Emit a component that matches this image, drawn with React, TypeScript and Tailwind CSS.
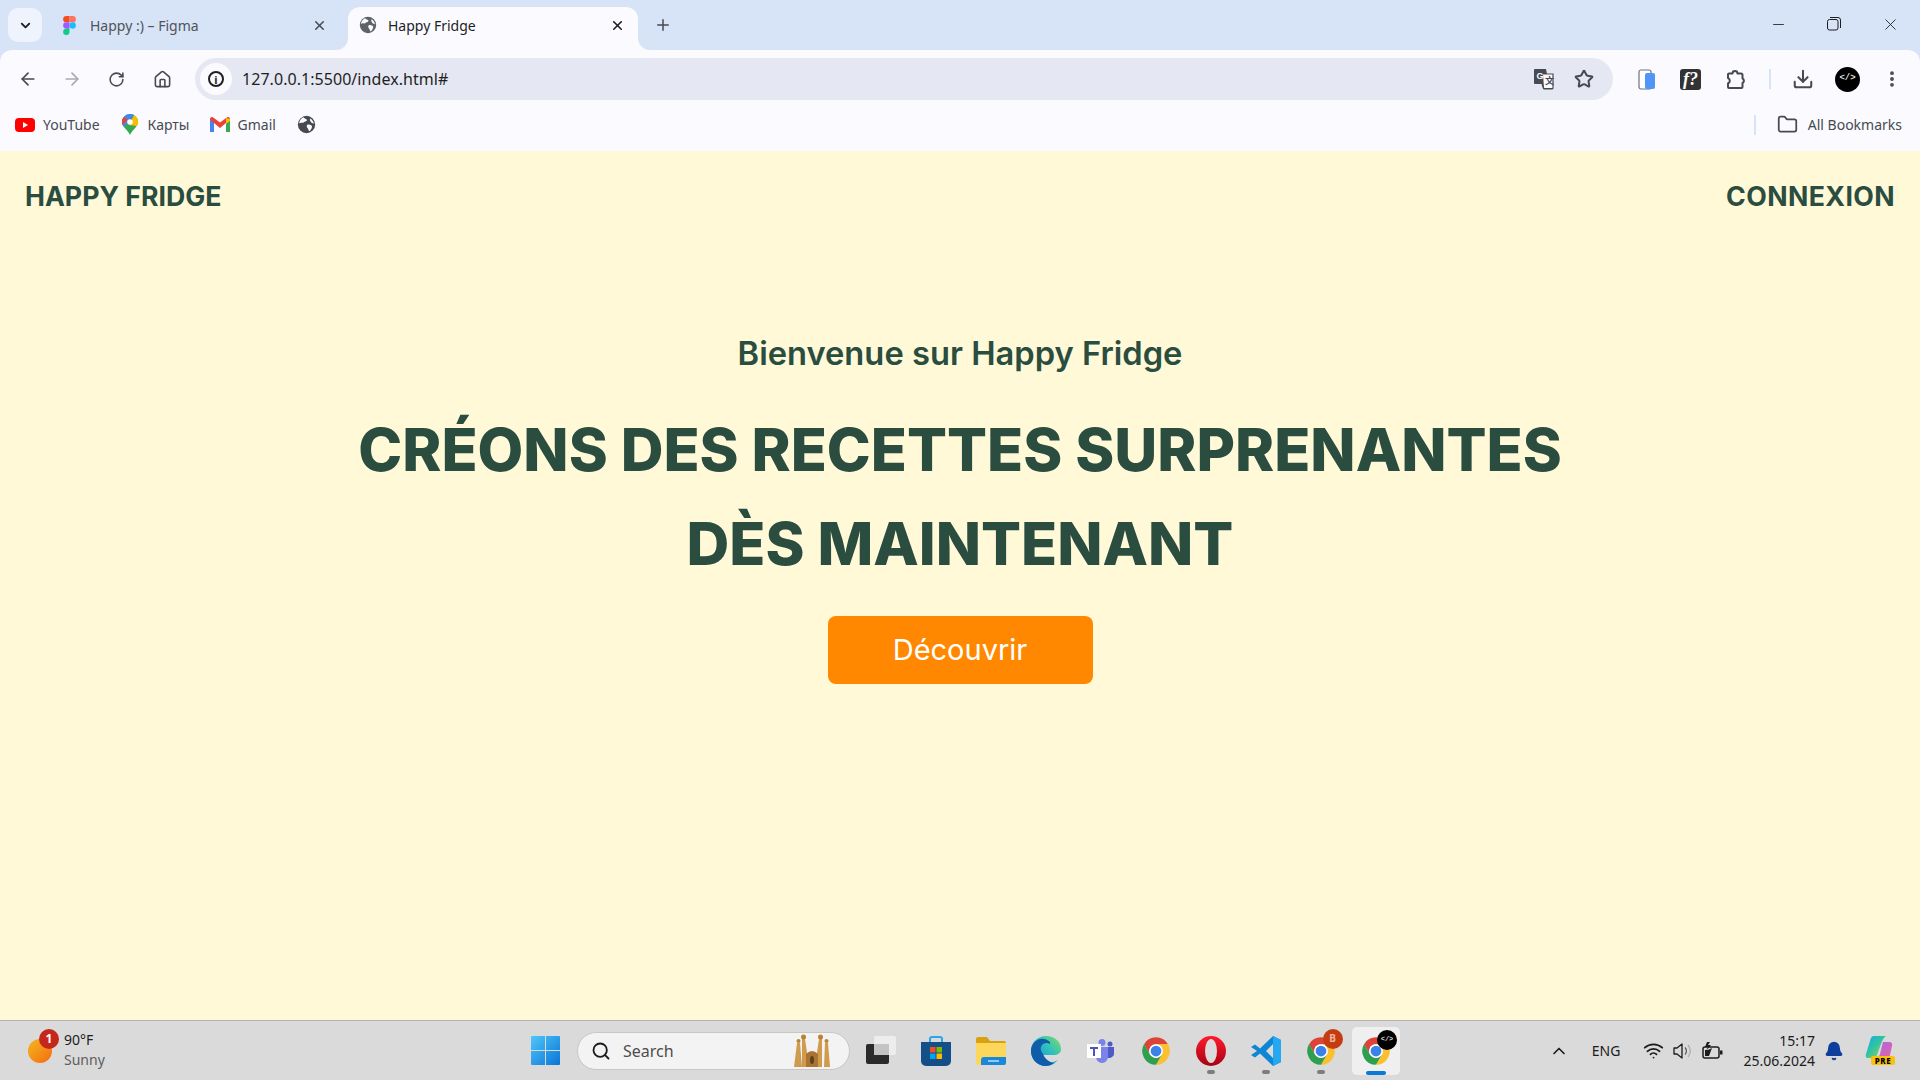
import React from "react";
import { ArrowLeft, ArrowRight, RotateCw, Home, X, Plus, ChevronDown, Minus, Star, Download, EllipsisVertical, Folder, Search, ChevronUp, Wifi, Bell } from "lucide-react";

const Globe = ({ s = 18, c = "#5f6368" }: { s?: number; c?: string }) => (
  <svg width={s} height={s} viewBox="0 0 18 18" className="shrink-0">
    <circle cx="9" cy="9" r="8.2" fill={c} />
    <path d="M6 2.2C7 3.5 8.8 3.6 9.6 4.8 9 6.4 6.8 6 6 7.4 4.8 7.6 3.4 6.8 2 8 2.2 5.4 3.8 3.3 6 2.2Z M9.8 9.2c1.8-.4 3.2.4 4.4 1.2.2 1.6-.8 3.6-2.4 5C10.800 15.200 11 13.400 10 12.400 9 11.600 9 10 9.800 9.200Z M12.500 3.200C14.500 4.400 15.800 6.400 16 8.300 14.800 8 13.400 7.400 12.800 6 12.300 5 12 4 12.500 3.200Z" fill="#fafaff" />
  </svg>
);

const Chrome = ({ s = 30 }: { s?: number }) => (
  <svg width={s} height={s} viewBox="0 0 24 24" className="shrink-0">
    <path d="M21.530 6.500A11 11 0 0 0 2.470 6.500L7.240 14.750A5.500 5.500 0 0 1 12 6.500Z" fill="#db4437" />
    <path d="M21.530 6.500A11 11 0 0 0 2.470 6.500L7.240 14.750A5.500 5.500 0 0 1 12 6.500Z" fill="#fbc02d" transform="rotate(120 12 12)" />
    <path d="M21.530 6.500A11 11 0 0 0 2.470 6.500L7.240 14.750A5.500 5.500 0 0 1 12 6.500Z" fill="#2e9e4f" transform="rotate(240 12 12)" />
    <circle cx="12" cy="12" r="5.500" fill="#fff" />
    <circle cx="12" cy="12" r="4.300" fill="#3b82e8" />
  </svg>
);

const Figma = () => (
  <svg width="13" height="19" viewBox="0 0 12 18" className="shrink-0">
    <path d="M3 0h3v6H3a3 3 0 0 1 0-6Z" fill="#f24e1e" />
    <path d="M6 0h3a3 3 0 0 1 0 6H6Z" fill="#ff7262" />
    <path d="M3 6h3v6H3a3 3 0 0 1 0-6Z" fill="#a259ff" />
    <circle cx="9" cy="9" r="3" fill="#1abcfe" />
    <path d="M3 12h3v3a3 3 0 1 1-3-3Z" fill="#0acf83" />
  </svg>
);

const Slot = ({ w = 55, children, dot = false }: { w?: number; children: React.ReactNode; dot?: boolean }) => (
  <div className="relative flex h-full items-center justify-center shrink-0" style={{ width: w }}>
    {children}
    {dot && <div className="absolute bottom-[6px] h-[4px] w-[8px] rounded-full bg-[#7d7d7d]" />}
  </div>
);

function TabStrip() {
  return (
    <div className="flex h-[50px] shrink-0 items-stretch bg-[#d7e3f6] text-[14px] text-[#474a51]">
      <div className="ml-[8px] mt-[8px] flex h-[34px] w-[34px] items-center justify-center rounded-[10px] bg-[#eff3fd]">
        <ChevronDown size={15} strokeWidth={3} color="#1f1f1f" />
      </div>
      <div className="ml-[21px] flex w-[279px] items-center">
        <Figma />
        <span className="ml-[14px] flex-1 text-[#50535a]">Happy :) – Figma</span>
        <X size={15} strokeWidth={2.4} className="mr-[15px]" color="#474a51" />
      </div>
      <div className="relative ml-[6px] mt-[7px] flex w-[290px] items-center rounded-t-[12px] bg-[#fafaff] pl-[11px] pb-[7px] text-[#1f1f1f]">
        <svg width="12" height="12" viewBox="0 0 12 12" className="absolute -left-[12px] bottom-0">
          <path d="M12 0v12H0A12 12 0 0 0 12 0Z" fill="#fafaff" />
        </svg>
        <Globe />
        <span className="ml-[11px] flex-1">Happy Fridge</span>
        <X size={15} strokeWidth={2.6} className="mr-[13px]" color="#1f1f1f" />
        <svg width="12" height="12" viewBox="0 0 12 12" className="absolute -right-[12px] bottom-0">
          <path d="M0 0v12h12A12 12 0 0 1 0 0Z" fill="#fafaff" />
        </svg>
      </div>
      <div className="ml-[16px] flex w-[18px] items-center justify-center">
        <Plus size={18} strokeWidth={2} color="#474a51" />
      </div>
      <div className="ml-auto flex items-center pb-[2px] text-[#1f1f1f]">
        <div className="flex w-[56px] justify-center"><Minus size={17} strokeWidth={1.2} /></div>
        <div className="flex w-[56px] justify-center">
          <svg width="14" height="14" viewBox="0 0 14 14" fill="none" stroke="#1f1f1f" strokeWidth="1">
            <rect x="0.500" y="2.500" width="10.500" height="10.500" rx="2" />
            <path d="M3 .5h8a2.500 2.500 0 0 1 2.500 2.500v8" />
          </svg>
        </div>
        <div className="flex w-[58px] justify-center pr-[2px]"><X size={19} strokeWidth={1.1} /></div>
      </div>
    </div>
  );
}

function Toolbar() {
  return (
    <div className="flex h-[58px] shrink-0 items-center rounded-t-[12px] bg-[#fafaff] text-[#474a51]">
      <div className="flex w-[195px] shrink-0 items-center pl-[18px]">
        <ArrowLeft size={20} strokeWidth={2} className="mr-[24px]" />
        <ArrowRight size={20} strokeWidth={2} color="#a8aab0" className="mr-[26px]" />
        <RotateCw size={17} strokeWidth={2.2} className="mr-[28px]" />
        <Home size={19} strokeWidth={2} />
      </div>
      <div className="flex h-[42px] flex-1 items-center rounded-full bg-[#e5e8f2] pl-[5px] pr-[19px]">
        <div className="flex h-[32px] w-[32px] items-center justify-center rounded-full bg-[#fafaff]">
          <div className="flex h-[16px] w-[16px] items-center justify-center rounded-full border-2 border-[#1f1f1f] text-[11px] font-bold leading-none text-[#1f1f1f]">i</div>
        </div>
        <span className="ml-[10px] flex-1 text-[16px] tracking-[0.05px] text-[#1f1f1f]">127.0.0.1:5500/index.html#</span>
        <svg width="22" height="22" viewBox="0 0 22 22" className="mr-[19px]">
          <path d="M2 1h11l1 5h6v14a1 1 0 0 1-1 1H10l-1-5H2a1 1 0 0 1-1-1V2a1 1 0 0 1 1-1Z" fill="#474a51" />
          <path d="M10 6h10v14H11Z" fill="#fafaff" />
          <path d="M10 6h10v14a1 1 0 0 1-1 1h-8L9 16" fill="none" stroke="#474a51" strokeWidth="1.200" />
          <text x="3.500" y="11" fontSize="9" fontWeight="700" fill="#fff" fontFamily="'Liberation Sans', sans-serif">G</text>
          <text x="12" y="16" fontSize="9" fontWeight="700" fill="#474a51" fontFamily="'Noto Sans CJK SC', sans-serif">文</text>
        </svg>
        <Star size={20} strokeWidth={2.4} color="#474a51" />
      </div>
      <div className="flex shrink-0 items-center">
        <div className="ml-[24px] flex w-[20px] justify-center">
          <svg width="18" height="21" viewBox="0 0 18 21">
            <rect x="1" y="1" width="12" height="19" rx="2" fill="#fff" stroke="#6b7280" strokeWidth="1.200" />
            <rect x="7" y="4" width="10" height="16" rx="2" fill="#4f95f7" />
          </svg>
        </div>
        <div className="ml-[23px] flex h-[21px] w-[21px] items-center justify-center rounded-[3px] bg-[#333] font-['Liberation_Serif',serif] text-[18px] font-bold italic leading-none text-white">f?</div>
        <svg width="21" height="21" viewBox="0 0 21 21" fill="none" stroke="#474a51" strokeWidth="2" className="ml-[25px]">
          <path d="M3 4.500h3.500a2.500 2.500 0 0 1 5 0H15a1.500 1.500 0 0 1 1.500 1.500v3.500a2.500 2.500 0 0 1 0 4.500V18a1 1 0 0 1-1 1H3a1 1 0 0 1-1-1v-3.500a3 3 0 0 0 0-5.500V5.500a1 1 0 0 1 1-1Z" strokeLinejoin="round" />
        </svg>
        <div className="ml-[22px] h-[20px] w-[2px] bg-[#d7e3f6]" />
        <Download size={22} strokeWidth={2.2} className="ml-[21px]" />
        <div className="ml-[21px] flex h-[25px] w-[25px] items-center justify-center rounded-full bg-black font-['Liberation_Mono',monospace] text-[9px] font-bold text-[#dddddd]">&lt;/&gt;</div>
        <EllipsisVertical size={20} strokeWidth={2.6} className="ml-[22px] mr-[18px]" />
      </div>
    </div>
  );
}

function Bookmarks() {
  return (
    <div className="flex h-[43px] shrink-0 items-center bg-[#fafaff] pb-[10px] text-[14px] text-[#474a51]">
      <svg width="20" height="14" viewBox="0 0 20 14" className="ml-[15px] shrink-0">
        <rect width="20" height="14" rx="4" fill="#f00" />
        <path d="M8 4l5 3-5 3Z" fill="#fff" />
      </svg>
      <span className="ml-[8px]">YouTube</span>
      <svg width="16" height="21" viewBox="0 0 16 21" className="ml-[22px] shrink-0">
        <path d="M8 21C6 16 0 13 0 8a8 8 0 0 1 16 0c0 5-6 8-8 13Z" fill="#34a853" />
        <path d="M2 3a8 8 0 0 1 6-3 8 8 0 0 1 4 1L2 13a8 8 0 0 1-2-5 8 8 0 0 1 2-5Z" fill="#4285f4" />
        <path d="M2 3l4 3-6 5a8 8 0 0 1 2-8Z" fill="#ea4335" />
        <path d="M12 1a8 8 0 0 1 4 7 8 8 0 0 1-1 4L7 11Z" fill="#fbbc04" />
        <circle cx="8" cy="8" r="2.800" fill="#fff" />
      </svg>
      <span className="ml-[10px]">Карты</span>
      <svg width="20" height="15" viewBox="0 0 20 15" className="ml-[20px] shrink-0">
        <path d="M0 2v13h4V6l6 5 6-5v9h4V2a2 2 0 0 0-3.200-1.600L10 5.500 3.200.4A2 2 0 0 0 0 2Z" fill="#ea4335" />
        <path d="M0 3v12h4V6Z" fill="#4285f4" />
        <path d="M16 6v9h4V3Z" fill="#34a853" />
        <path d="M16 1l4 1v2l-4 3Z" fill="#fbbc04" />
      </svg>
      <span className="ml-[8px]">Gmail</span>
      <div className="ml-[21px]"><Globe s={19} c="#474a51" /></div>
      <div className="ml-auto flex items-center">
        <div className="h-[20px] w-[2px] bg-[#d7e3f6]" />
        <Folder size={21} strokeWidth={2} className="ml-[21px]" />
        <span className="ml-[10px] mr-[18px]">All Bookmarks</span>
      </div>
    </div>
  );
}

function Page() {
  return (
    <div className="flex flex-1 flex-col bg-[#fff9d8] font-['Inter',sans-serif] text-[#2a4d40]">
      <div className="flex items-center justify-between pl-[25px] pr-[25px] pt-[25px] text-[26.7px] font-bold leading-[40px]">
        <span>HAPPY FRIDGE</span>
        <span className="tracking-[0.4px]">CONNEXION</span>
      </div>
      <div className="mt-[113px] flex flex-col items-center">
        <p className="text-[32.700px] font-semibold leading-[48px]">Bienvenue sur Happy Fridge</p>
        <h1 className="mt-[26px] text-center text-[59.200px] font-extrabold leading-[94px]">
          CRÉONS DES RECETTES SURPRENANTES
          <br />
          DÈS MAINTENANT
        </h1>
        <button className="mt-[25px] flex h-[68px] w-[265px] items-center justify-center rounded-[8px] bg-[#ff8800] text-[29px] text-white">Découvrir</button>
      </div>
    </div>
  );
}

function Taskbar() {
  return (
    <div className="flex h-[60px] shrink-0 items-stretch border-t border-[#b2b2b2] bg-[#dadada] font-['Noto_Sans',sans-serif] text-[#1c1c1c]">
      <div className="flex w-[525px] shrink-0 items-center pl-[28px]">
        <div className="relative h-[24px] w-[24px] rounded-full bg-gradient-to-br from-[#f3b61f] to-[#f26a10]">
          <div className="absolute -right-[7px] -top-[10px] flex h-[20px] w-[20px] items-center justify-center rounded-full bg-[#c4281c] text-[12px] font-bold text-white">1</div>
        </div>
        <div className="ml-[12px] pb-[2px] text-[14px] leading-[20px]">
          <div>90°F</div>
          <div className="text-[#5e5e5e]">Sunny</div>
        </div>
      </div>
      <div className="flex items-center">
        <Slot w={40}>
          <svg width="29" height="29" viewBox="0 0 29 29">
            <defs><linearGradient id="w" x1="0" y1="0" x2="1" y2="1"><stop offset="0" stopColor="#4fc6fb" /><stop offset="1" stopColor="#0a74d6" /></linearGradient></defs>
            <path d="M0 1a1 1 0 0 1 1-1h13v14H0Zm15-1h13a1 1 0 0 1 1 1v13H15ZM0 15h14v14H1a1 1 0 0 1-1-1Zm15 0h14v13a1 1 0 0 1-1 1H15Z" fill="url(#w)" />
          </svg>
        </Slot>
        <div className="ml-[12px] flex h-[38px] w-[273px] items-center rounded-full border border-[#c8c6c6] bg-[#f4f3f3] pl-[13px]">
          <Search size={20} strokeWidth={2.2} color="#1c1c1c" />
          <span className="ml-[12px] flex-1 text-[16px] text-[#4d4d4d]">Search</span>
          <svg width="36" height="33" viewBox="0 0 36 33" className="mr-[19px]">
            <path d="M0 33 3 9h3l2 24ZM8 33 8 5h3l3 20h8l3-20h3l0 28ZM30 33l1-24h3l2 24Z" fill="#cf9b4f" />
            <path d="M12 33V20q6-6 12 0v13Z" fill="#a97432" />
            <ellipse cx="18" cy="26" rx="2" ry="4" fill="#5f3f1d" />
            <circle cx="4.500" cy="7" r="2" fill="#b98432" /><circle cx="9.500" cy="3" r="2.500" fill="#b98432" /><circle cx="26.500" cy="3" r="2.500" fill="#b98432" /><circle cx="32.500" cy="7" r="2" fill="#b98432" />
          </svg>
        </div>
        <div className="ml-[3px] flex h-full w-[55px] shrink-0 items-center justify-center">
          <svg width="30" height="30" viewBox="0 0 30 30">
            <rect x="0" y="8" width="23" height="20" rx="2" fill="#2b2b2b" />
            <rect x="8" y="0" width="22" height="19" rx="2" fill="#efeeee" fillOpacity="0.9" />
            <rect x="8" y="8" width="15" height="11" fill="#c4c4c4" />
          </svg>
        </div>
        <Slot w={55}>
          <svg width="30" height="30" viewBox="0 0 30 30">
            <path d="M9 7V3a2 2 0 0 1 2-2h8a2 2 0 0 1 2 2v4" fill="none" stroke="#2ba6e8" strokeWidth="2" />
            <path d="M0 6h30v19a5 5 0 0 1-5 5H5a5 5 0 0 1-5-5Z" fill="#144f87" />
            <rect x="9" y="11" width="5.500" height="5.500" fill="#f25022" /><rect x="15.500" y="11" width="5.500" height="5.500" fill="#7fba00" />
            <rect x="9" y="17.500" width="5.500" height="5.500" fill="#00a4ef" /><rect x="15.500" y="17.500" width="5.500" height="5.500" fill="#ffb900" />
          </svg>
        </Slot>
        <Slot w={55}>
          <svg width="30" height="28" viewBox="0 0 30 28">
            <path d="M0 2a2 2 0 0 1 2-2h9l3 4h14a2 2 0 0 1 2 2v4H0Z" fill="#d9a010" />
            <path d="M0 6h30v20a2 2 0 0 1-2 2H2a2 2 0 0 1-2-2Z" fill="#fcd75b" />
            <path d="M5 28v-5a3 3 0 0 1 3-3h22v6a2 2 0 0 1-2 2Z" fill="#1b87d8" />
            <rect x="12" y="23" width="11" height="2" fill="#8dcbf3" />
          </svg>
        </Slot>
        <Slot w={55}>
          <svg width="30" height="30" viewBox="0 0 30 30">
            <defs>
              <linearGradient id="e1" x1="0" y1="1" x2="1" y2="0"><stop offset="0" stopColor="#1a8fdc" /><stop offset="0.550" stopColor="#2cbcc4" /><stop offset="1" stopColor="#7be25e" /></linearGradient>
            </defs>
            <path d="M15 0C24 0 30 6 30 13c0 4-3 6-8 6H11c0 5 6 8 11 7 2-.4 4-1.400 5-2.400C24 28 20 30 15 30 6 30 0 23 0 15S6 0 15 0Z" fill="url(#e1)" />
            <path d="M0 15C0 7 7 2 13 3c4 .8 7 3 6 5-3-2-8-1-9 3-1 3 1 5 2 7 2 5 6 8 11 9-2.500 2-5.500 3-8 3C6 30 0 23 0 15Z" fill="#0f5cab" />
          </svg>
        </Slot>
        <Slot w={55}>
          <svg width="27" height="24" viewBox="0 0 27 24">
            <circle cx="15" cy="3.500" r="3.500" fill="#7b83eb" /><circle cx="23" cy="5" r="2.500" fill="#5059c9" />
            <path d="M19 8h8v7a5 5 0 0 1-8 3Z" fill="#5059c9" />
            <path d="M8 8h13v10a6 6 0 0 1-12 0Z" fill="#7b83eb" />
            <rect x="0" y="5" width="14" height="14" fill="#fff" />
            <path d="M3 8h8v2H8v7H6v-7H3Z" fill="#4b53bc" />
          </svg>
        </Slot>
        <Slot w={55}><Chrome /></Slot>
        <Slot w={55} dot>
          <svg width="30" height="30" viewBox="0 0 30 30">
            <defs><linearGradient id="o" x1="0" y1="0" x2="0" y2="1"><stop offset="0" stopColor="#ff1b2d" /><stop offset="1" stopColor="#a70014" /></linearGradient></defs>
            <ellipse cx="15" cy="15" rx="15" ry="15" fill="url(#o)" />
            <ellipse cx="15" cy="15" rx="6" ry="12" fill="#dcdada" />
          </svg>
        </Slot>
        <Slot w={55} dot>
          <svg width="30" height="30" viewBox="0 0 30 30">
            <path d="M22 0 30 4v22l-8 4L9 17.500l-5 4-4-2.500 6-4-6-4 4-2.500 5 4Zm0 8-7 7 7 7Z" fill="#0f86d3" />
            <path d="M22 0 30 4v22l-8 4Z" fill="#25a8f0" />
          </svg>
        </Slot>
        <Slot w={55} dot>
          <div className="relative">
            <Chrome />
            <div className="absolute -right-[7px] -top-[7px] flex h-[20px] w-[20px] items-center justify-center rounded-full bg-[#c43d11] text-[10px] font-bold text-[#f3b6a0]">B</div>
          </div>
        </Slot>
        <div className="relative ml-[4px] flex h-[48px] w-[48px] items-center justify-center self-center rounded-[5px] bg-[#efefef]">
          <div className="relative">
            <Chrome />
            <div className="absolute -right-[6px] -top-[6px] flex h-[20px] w-[20px] items-center justify-center rounded-full bg-black font-['Liberation_Mono',monospace] text-[7px] font-bold text-[#ddd]">&lt;/&gt;</div>
          </div>
          <div className="absolute bottom-0 h-[4px] w-[20px] rounded-full bg-[#0a78d6]" />
        </div>
      </div>
      <div className="ml-auto flex items-center pr-[26px]">
        <ChevronUp size={20} strokeWidth={2} />
        <span className="ml-[23px] text-[14px]">ENG</span>
        <Wifi size={21} strokeWidth={2} className="ml-[23px]" />
        <svg width="21" height="18" viewBox="0 0 21 18" fill="none" className="ml-[9px]">
          <path d="M1 6h3l5-4v14l-5-4H1Z" stroke="#1c1c1c" strokeWidth="1.300" strokeLinejoin="round" />
          <path d="M12 5.500a5 5 0 0 1 0 7" stroke="#555" strokeWidth="1.200" />
          <path d="M15 3a9 9 0 0 1 0 12" stroke="#aaa" strokeWidth="1.200" />
        </svg>
        <svg width="21" height="18" viewBox="0 0 21 18" className="ml-[8px]">
          <rect x="1" y="5" width="16" height="11" rx="2" fill="none" stroke="#1c1c1c" strokeWidth="1.500" />
          <rect x="18" y="8.500" width="2.500" height="4" fill="#1c1c1c" />
          <path d="M3 14V8h3l4-2-3 8Z" fill="#1c1c1c" />
          <path d="M5 0 3 5h3l-2 4 5-6H6l2-3Z" fill="#1c1c1c" />
        </svg>
        <div className="ml-[20px] text-right text-[14px] leading-[20px]">
          <div>15:17</div>
          <div>25.06.2024</div>
        </div>
        <Bell size={20} fill="#0f3f9c" color="#0f3f9c" className="ml-[9px]" />
        <div className="relative ml-[21px] h-[29px] w-[29px]">
          <svg width="28" height="24" viewBox="0 0 28 24">
            <defs><linearGradient id="c1" x1="0" y1="0" x2="1" y2="1"><stop offset="0" stopColor="#19a7e8" /><stop offset="0.450" stopColor="#2ec4a4" /><stop offset="1" stopColor="#b4d341" /></linearGradient>
            <linearGradient id="c2" x1="0" y1="0" x2="1" y2="1"><stop offset="0" stopColor="#9b6cf0" /><stop offset="1" stopColor="#f0609c" /></linearGradient></defs>
            <path d="M9 0h12q-3 2-5 8l-4 11q-1 3-5 3H3q-3 0-2-4L5 5q1-5 4-5Z" fill="url(#c1)" />
            <path d="M18 6h6q4 0 3 4l-2 9q-1 4-5 4H10q4-1 5-5l2-8Z" fill="url(#c2)" />
          </svg>
          <div className="absolute bottom-0 left-[6px] flex h-[9px] w-[24px] items-center justify-center rounded-[2px] bg-[#f8c20f] text-[8px] font-extrabold leading-none tracking-[0.5px] text-black">PRE</div>
        </div>
      </div>
    </div>
  );
}

export default function App() {
  return (
    <div className="flex h-[1080px] w-[1920px] flex-col overflow-hidden bg-[#d7e3f6] font-['Noto_Sans',sans-serif]">
      <TabStrip />
      <Toolbar />
      <Bookmarks />
      <Page />
      <Taskbar />
    </div>
  );
}
